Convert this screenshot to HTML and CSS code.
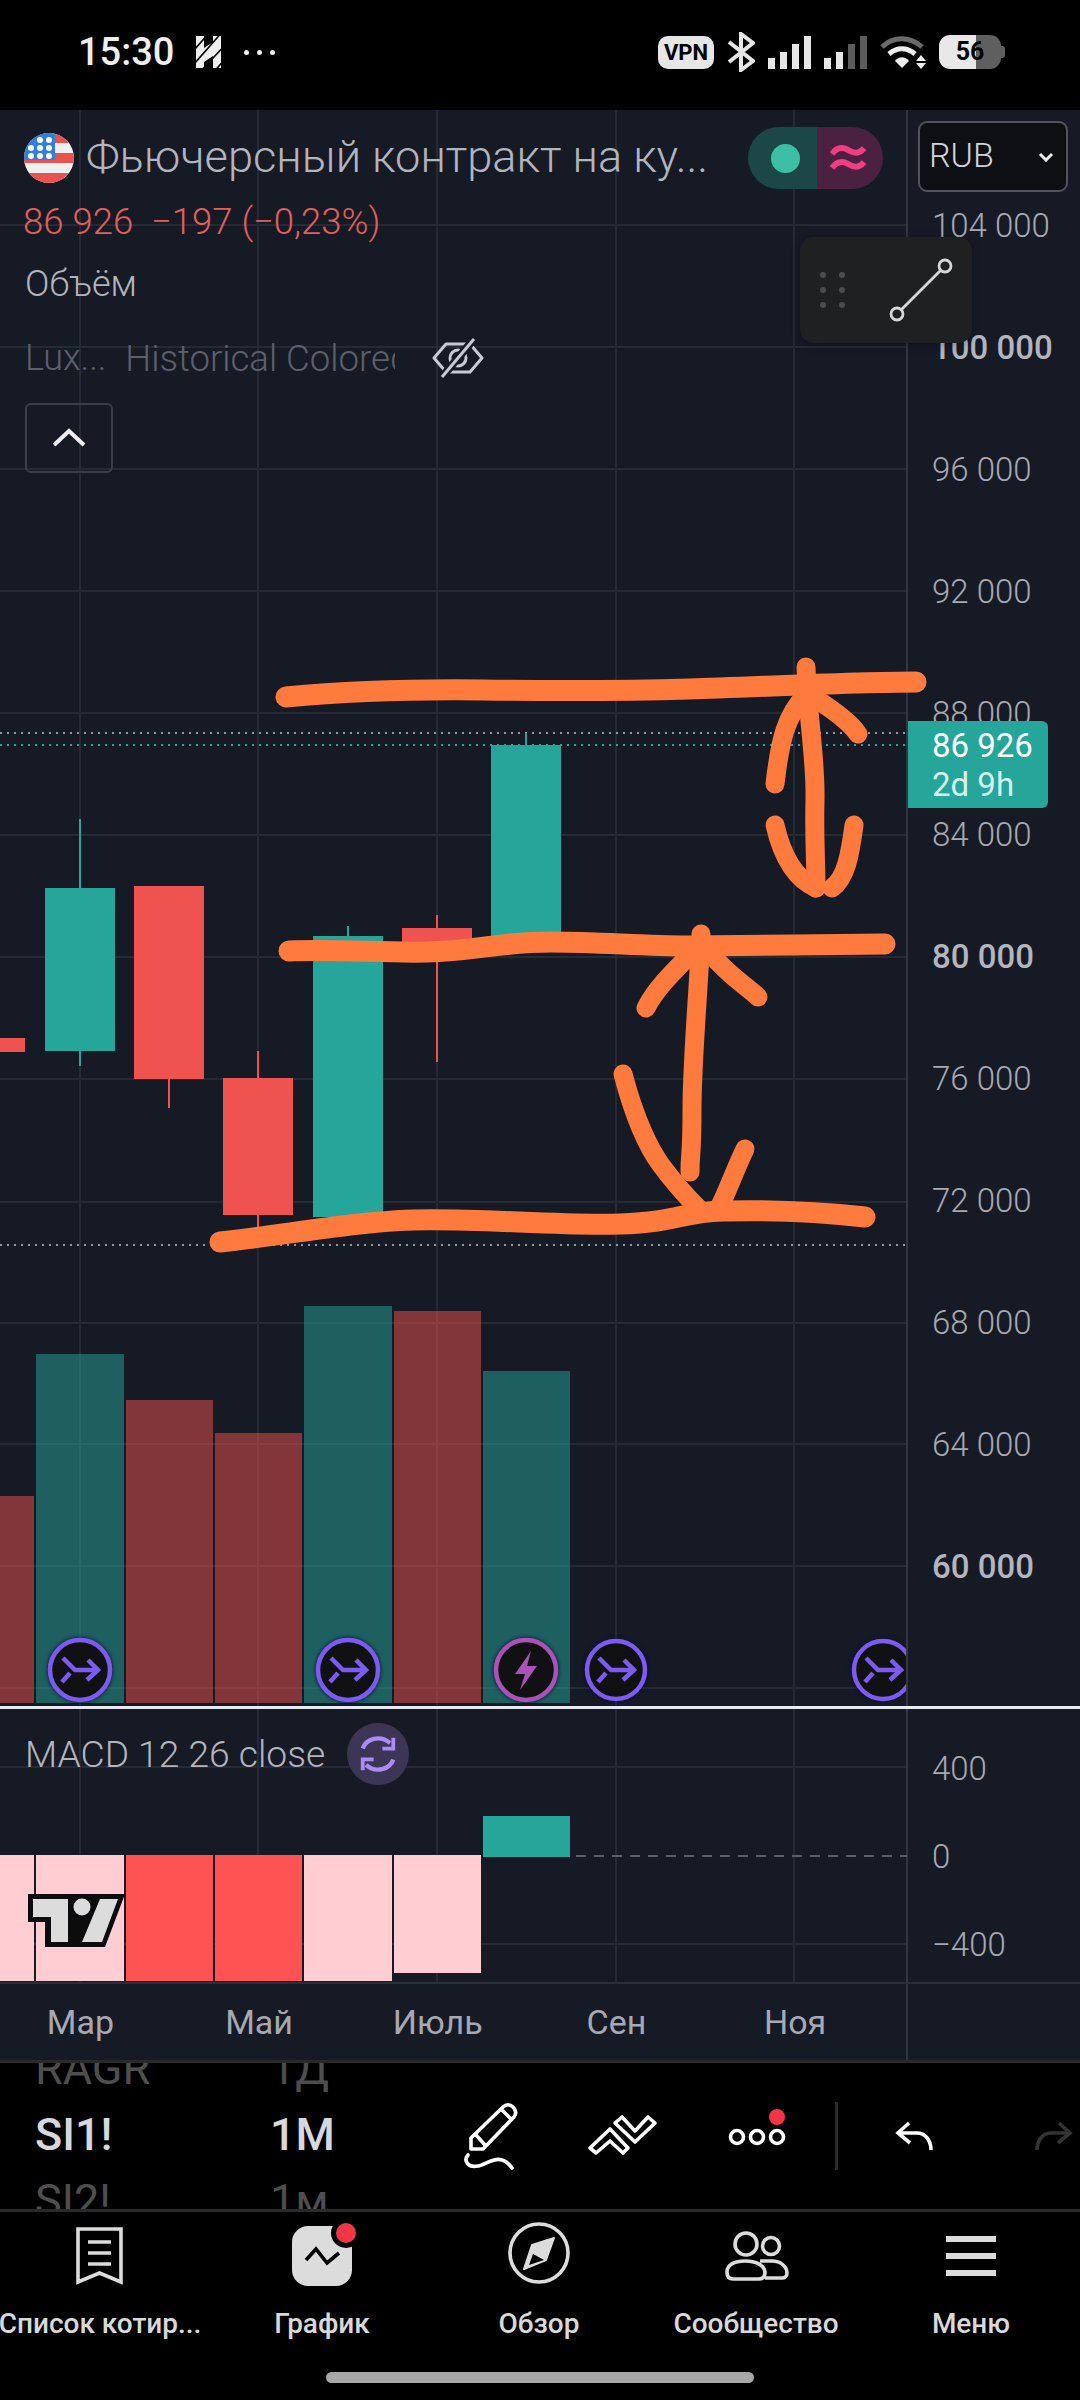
FILE: index.html
```html
<!DOCTYPE html>
<html lang="ru">
<head>
  <meta charset="UTF-8" />
  <meta name="viewport" content="width=device-width, initial-scale=1.0"/>
  <title>SI1! 1M</title>
  <link rel="stylesheet" href="styles.css">
</head>
<body>

<svg class="defs" width="0" height="0">
    <symbol id="swapArrow" viewBox="-32 -32 64 64">
        <path d="M-17 -12 L-5 0 H18 M8 -10 L18 0 L7 10 M-18 12 L-10 3" fill="none" stroke="currentColor" stroke-width="4.5"/>
    </symbol>
</svg>

<!-- Status bar -->
<header class="status-bar">
    <span class="clock">15:30</span>
    <svg class="status-app" viewBox="0 0 26 32" width="26" height="32">
        <path d="M0 0H8V12L17 6V0H25V32H17V20L8 26V32H0Z" fill="#eee"/>
        <path d="M-2 14L14 -4M-2 28L28 -6M4 36L30 8M16 38L30 22" stroke="#000" stroke-width="1.6"/>
    </svg>
    <span class="status-more"><i></i><i></i><i></i></span>
    <div class="status-icons">
        <span class="vpn">VPN</span>
        <svg viewBox="0 0 28 40" width="28" height="40">
            <path d="M2 10L26 29L14 38V2L26 11L2 30" fill="none" stroke="#e6e6e6" stroke-width="4"/>
        </svg>
        <svg viewBox="0 0 43 33" width="43" height="33" fill="#e6e6e6">
            <rect x="0" y="22" width="7" height="11"/><rect x="12" y="16" width="7" height="17"/>
            <rect x="24" y="8" width="7" height="25"/><rect x="36" y="0" width="7" height="33"/>
        </svg>
        <svg viewBox="0 0 43 33" width="43" height="33" fill="#e6e6e6">
            <rect x="0" y="22" width="7" height="11"/><rect x="12" y="16" width="7" height="17"/>
            <rect x="24" y="8" width="7" height="25" fill="#5c5c5c"/><rect x="36" y="0" width="7" height="33" fill="#5c5c5c"/>
        </svg>
        <svg viewBox="0 0 46 33" width="46" height="33">
            <path d="M2 11C13 0 30 0 42 11" fill="none" stroke="#6a6a6a" stroke-width="5"/>
            <path d="M9 18C17 11 27 11 35 18" fill="none" stroke="#eee" stroke-width="5"/>
            <path d="M15 25C19 20 25 20 29 25L22 32Z" fill="#eee"/>
            <path d="M41 19L46 25H36ZM36 27H46L41 33Z" fill="#eee"/>
        </svg>
        <span class="battery">56</span>
    </div>
</header>

<main class="chart">
    <!-- grid, candles, bars -->
    <svg class="chart-marks" viewBox="0 110 1080 1950" width="1080" height="1950">
        <clipPath id="plotClip"><rect x="0" y="110" width="906" height="1600"/></clipPath>
        <g class="grid">
            <path d="M0 225H907M0 347H907M0 469H907M0 591H907M0 713H907M0 835H907M0 957H907M0 1079H907M0 1202H907M0 1323H907M0 1444H907M0 1566H907M0 1688H907M0 1767H907M0 1944H907"/>
            <path d="M80 110V1982M258 110V1982M437 110V1982M616 110V1982M794 110V1982"/>
        </g>
        <path class="axis-line" d="M907 110V2060"/>

        <path class="dots-light" d="M0 733H907M0 1245H907"/>
        <path class="dots-teal" d="M0 745H907"/>

        <g class="up">
            <rect x="45" y="888" width="70" height="163"/><rect x="79" y="819" width="2" height="247"/>
            <rect x="313" y="936" width="70" height="281"/><rect x="347" y="926" width="2" height="296"/>
            <rect x="491" y="745" width="70" height="200"/><rect x="525" y="733" width="2" height="14"/>
        </g>
        <g class="down">
            <rect x="0" y="1038" width="25" height="14"/>
            <rect x="134" y="886" width="70" height="193"/><rect x="168" y="1079" width="2" height="29"/>
            <rect x="223" y="1078" width="70" height="137"/><rect x="257" y="1051" width="2" height="180"/>
            <rect x="402" y="928" width="70" height="30"/><rect x="436" y="915" width="2" height="147"/>
        </g>

        <g class="vol-up">
            <rect x="36" y="1354" width="88" height="349"/>
            <rect x="304" y="1306" width="88" height="397"/>
            <rect x="483" y="1371" width="87" height="332"/>
        </g>
        <g class="vol-down">
            <rect x="0" y="1496" width="34" height="207"/>
            <rect x="126" y="1400" width="87" height="303"/>
            <rect x="215" y="1433" width="87" height="270"/>
            <rect x="394" y="1311" width="87" height="392"/>
        </g>

        <g clip-path="url(#plotClip)">
            <g class="event">
                <circle cx="80" cy="1670" r="30"/><use href="#swapArrow" x="48" y="1638" width="64" height="64"/>
            </g>
            <g class="event">
                <circle cx="348" cy="1670" r="30"/><use href="#swapArrow" x="316" y="1638" width="64" height="64"/>
            </g>
            <g class="event event-pink">
                <circle cx="526" cy="1670" r="30"/>
                <path class="bolt" d="M531 1651L515 1674H525L520 1690L537 1666H527Z"/>
            </g>
            <g class="event">
                <circle cx="616" cy="1670" r="29"/><use href="#swapArrow" x="584" y="1638" width="64" height="64"/>
            </g>
            <g class="event">
                <circle cx="883" cy="1670" r="29"/><use href="#swapArrow" x="851" y="1638" width="64" height="64"/>
            </g>
        </g>

        <path class="zero-line" d="M0 1856H907"/>
        <g class="hist-light">
            <rect x="0" y="1855" width="34" height="126"/>
            <rect x="36" y="1855" width="88" height="126"/>
            <rect x="304" y="1855" width="88" height="126"/>
            <rect x="394" y="1855" width="87" height="118"/>
        </g>
        <g class="hist-strong">
            <rect x="126" y="1855" width="87" height="126"/>
            <rect x="215" y="1855" width="87" height="126"/>
        </g>
        <rect class="hist-up" x="483" y="1816" width="87" height="41"/>

        <!-- TradingView mark -->
        <path d="M28 1894H125L105 1947H45V1922H28Z" fill="#0c0c0e"/>
        <path d="M33 1899H68V1942H51V1917H33ZM100 1899H118L102 1942H82Z" fill="#dcdcdc"/>
        <circle cx="82" cy="1907" r="12" fill="#0c0c0e"/>
        <circle cx="82" cy="1907" r="8.5" fill="#dcdcdc"/>
    </svg>

    <section class="pane pane-main">
        <div class="plot">
            <div class="legend">
                <div class="legend-title">
                    <svg class="flag" viewBox="0 0 50 50" width="50" height="50">
                        <clipPath id="flagClip"><circle cx="25" cy="25" r="25"/></clipPath>
                        <g clip-path="url(#flagClip)">
                            <rect width="50" height="50" fill="#f0f0f0"/>
                            <path d="M0 0H50V10H0ZM0 20H50V30H0ZM0 40H50V50H0Z" fill="#e8534f"/>
                            <rect width="31" height="27" fill="#2f7fe0"/>
                            <g fill="#fff">
                                <circle cx="16" cy="7" r="3"/><circle cx="25" cy="7" r="3"/>
                                <circle cx="7" cy="15" r="3"/><circle cx="16" cy="15" r="3"/><circle cx="25" cy="15" r="3"/>
                                <circle cx="7" cy="23" r="3"/><circle cx="16" cy="23" r="3"/><circle cx="25" cy="23" r="3"/>
                            </g>
                        </g>
                    </svg>
                    <span class="symbol-name">Фьючерсный контракт на ку...</span>
                    <div class="market-toggle">
                        <span class="toggle-open"><i></i></span>
                        <span class="toggle-delay">
                            <svg viewBox="0 0 36 28" width="36" height="28">
                                <path d="M2 10C7 3 13 3 18 6S29 11 34 4M2 24C7 17 13 17 18 20S29 25 34 18" fill="none" stroke="#f23d80" stroke-width="6"/>
                            </svg>
                        </span>
                    </div>
                </div>
                <div class="legend-price">86 926&nbsp; −197 (−0,23%)</div>
                <div class="legend-row">Объём</div>
                <div class="legend-row legend-hidden">
                    <span>Lux...</span>
                    <span class="hidden-name">Historical Colored</span>
                    <svg viewBox="0 0 52 42" width="52" height="42">
                        <path d="M2 21L14 7H38L50 21L38 35H14Z" fill="none" stroke="#c8cbd3" stroke-width="3" stroke-linejoin="round"/>
                        <circle cx="26" cy="21" r="8" fill="none" stroke="#c8cbd3" stroke-width="3"/>
                        <path d="M42 2L10 40" stroke="#161a25" stroke-width="8"/>
                        <path d="M42 2L10 40" stroke="#c8cbd3" stroke-width="3"/>
                    </svg>
                </div>
                <button class="collapse-btn">
                    <svg viewBox="0 0 34 20" width="34" height="20">
                        <path d="M2 17L17 3L32 17" fill="none" stroke="#eee" stroke-width="4"/>
                    </svg>
                </button>
            </div>
        </div>
        <div class="price-axis axis-main">
            <span>104 000</span>
            <span class="strong">100 000</span>
            <span>96 000</span>
            <span>92 000</span>
            <span>88 000</span>
            <span>84 000</span>
            <span class="strong">80 000</span>
            <span>76 000</span>
            <span>72 000</span>
            <span>68 000</span>
            <span>64 000</span>
            <span class="strong">60 000</span>
        </div>
    </section>

    <div class="pane-sep"></div>

    <section class="pane pane-macd">
        <div class="plot">
            <div class="macd-legend">
                <span>MACD 12 26 close</span>
                <span class="macd-sync">
                    <svg viewBox="0 0 44 44" width="48" height="48" fill="none" stroke="#a98cf5" stroke-width="4">
                        <path d="M8 17C11 8 24 4 33 12"/>
                        <path d="M36 27C33 36 20 40 11 32"/>
                        <path d="M36 7V17H26M8 37V27H18" stroke-width="3.5"/>
                    </svg>
                </span>
            </div>
        </div>
        <div class="price-axis axis-macd">
            <span>400</span>
            <span>0</span>
            <span>−400</span>
        </div>
    </section>

    <footer class="time-axis">
        <span>Мар</span><span>Май</span><span>Июль</span><span>Сен</span><span>Ноя</span>
    </footer>

    <!-- overlays -->
    <div class="currency"><span>RUB</span>
        <svg viewBox="0 0 16 10" width="16" height="10">
            <path d="M2 2L8 8L14 2" fill="none" stroke="#eee" stroke-width="3"/>
        </svg>
    </div>
    <div class="price-tag">
        <span>86 926</span>
        <span class="countdown">2d 9h</span>
    </div>
    <div class="tool-float">
        <span class="grip"><i></i><i></i><i></i><i></i><i></i><i></i></span>
        <svg viewBox="0 0 64 64" width="64" height="64" fill="none" stroke="#d8d8d8" stroke-width="2.8">
            <circle cx="8" cy="56" r="6"/>
            <circle cx="56" cy="8" r="6"/>
            <path d="M12.5 51.5L51.500 12.500"/>
        </svg>
    </div>

    <!-- hand drawn marks on top of the chart -->
    <svg class="annotations" viewBox="0 110 1080 1950" width="1080" height="1950">
        <path d="M286 697C340 692 400 689 482 690S620 691 689 689S850 682 916 682"/>
        <path class="arrow" d="M806 667C808 720 816 760 815 800S816 860 816 888"/>
        <path class="arrow" d="M775 784C780 740 786 715 806 695M818 700C835 712 850 722 858 734"/>
        <path class="arrow" d="M775 825C783 860 798 880 816 888M854 825C850 855 846 878 832 888"/>

        <path d="M289 951C340 949 380 953 427 952S500 942 551 942S640 946 689 946S830 944 885 944"/>
        <path class="arrow" d="M701 934C698 1000 692 1060 692 1110S690 1150 690 1172"/>
        <path class="arrow" d="M690 955C670 975 655 990 646 1008M712 955C728 975 745 985 758 997"/>
        <path class="arrow" d="M623 1074C635 1120 650 1150 661 1165S685 1195 699 1209M745 1149C735 1170 728 1190 720 1206"/>

        <path d="M220 1242C280 1236 350 1222 413 1220S560 1226 620 1224S680 1212 723 1211S820 1212 865 1217"/>
    </svg>
</main>

<!-- Drawing toolbar with symbol picker -->
<section class="toolbar">
    <div class="picker">
        <div class="picker-row picker-far"><span>RAGR</span><span>1Д</span></div>
        <div class="picker-row"><span>SI1!</span><span>1М</span></div>
        <div class="picker-row picker-far"><span>SI2!</span><span>1м</span></div>
    </div>
    <div class="tools">
        <svg viewBox="460 2100 60 70" width="60" height="70" fill="none" stroke="#fff" stroke-width="3.6" stroke-linejoin="round">
            <path d="M471 2148V2137L503 2106C506 2103 510 2103 513 2106S517 2112 514 2116L483 2148Z"/>
            <path d="M502 2109L512 2119M475 2133L486 2145"/>
            <path d="M468 2154C463 2160 468 2167 478 2165S500 2150 512 2167" stroke-linecap="round"/>
        </svg>
        <svg viewBox="585 2100 75 70" width="75" height="70" fill="none" stroke="#fff" stroke-width="3.6" stroke-linejoin="round">
            <path d="M590 2147L610 2128L628 2147L623 2152L610 2140L596 2152Z"/>
            <path d="M615 2122L622 2116L635 2130L648 2116L655 2122L635 2141Z"/>
        </svg>
        <svg viewBox="725 2100 65 70" width="65" height="70">
            <g fill="none" stroke="#fff" stroke-width="3.6">
                <circle cx="737" cy="2136" r="6.500"/><circle cx="757" cy="2136" r="6.500"/><circle cx="777" cy="2136" r="6.500"/>
            </g>
            <circle cx="777" cy="2116" r="10" fill="#000"/>
            <circle cx="777" cy="2116" r="8" fill="#f23645"/>
        </svg>
        <span class="tool-sep"></span>
        <svg class="tool-undo" viewBox="890 2100 50 70" width="50" height="70" fill="none" stroke="#fff" stroke-width="3.600">
            <path d="M910 2122L899 2132L911 2142M899 2132H918C926 2132 932 2139 932 2149"/>
        </svg>
        <svg class="tool-redo" viewBox="1030 2100 50 70" width="50" height="70" fill="none" stroke="#333" stroke-width="3.600">
            <path d="M1060 2122L1071 2132L1059 2142M1071 2132H1052C1044 2132 1038 2139 1038 2149"/>
        </svg>
    </div>
</section>

<!-- Bottom navigation -->
<nav class="bottom-nav">
    <div class="nav-item">
        <svg viewBox="70 2225 76 70" width="76" height="70" fill="none" stroke="#dcdcdc" stroke-width="3.6">
            <path d="M86 2232H129V2285L107.500 2276L86 2285Z"/>
            <path d="M96 2245H119M96 2256H119M96 2267H119"/>
        </svg>
        <span>Список котир...</span>
    </div>
    <div class="nav-item">
        <svg viewBox="285 2225 76 70" width="76" height="70">
            <rect x="293" y="2229" width="60" height="60" rx="16" fill="#dcdcdc"/>
            <path d="M307 2263L317 2252L328 2266L340 2256" fill="none" stroke="#000" stroke-width="3.600"/>
            <circle cx="347" cy="2236" r="15" fill="#000"/>
            <circle cx="347" cy="2236" r="10" fill="#f23645"/>
        </svg>
        <span>График</span>
    </div>
    <div class="nav-item">
        <svg viewBox="500 2225 76 70" width="76" height="70">
            <circle cx="538" cy="2256" r="29" fill="none" stroke="#dcdcdc" stroke-width="3.600"/>
            <path d="M553 2241L545 2263L523 2272L531 2248Z" fill="#dcdcdc" stroke="#dcdcdc" stroke-width="2" stroke-linejoin="round"/>
            <path d="M532 2257L543 2263L528 2268Z" fill="#000"/>
        </svg>
        <span>Обзор</span>
    </div>
    <div class="nav-item">
        <svg viewBox="718 2225 76 70" width="76" height="70" fill="none" stroke="#dcdcdc" stroke-width="3.600">
            <circle cx="746" cy="2247" r="11"/>
            <circle cx="771" cy="2249" r="8.500"/>
            <path d="M727 2275C727 2268 734 2264 745 2264S764 2268 765 2275C765 2280 763 2282 759 2282H733C729 2282 727 2280 727 2275Z"/>
            <path d="M760 2264H772C781 2264 787 2270 787 2276C787 2279 785 2281 782 2281H765"/>
        </svg>
        <span>Сообщество</span>
    </div>
    <div class="nav-item">
        <svg viewBox="935 2225 76 70" width="76" height="70" fill="#dcdcdc">
            <rect x="948" y="2239" width="50" height="6"/>
            <rect x="948" y="2256" width="50" height="6"/>
            <rect x="948" y="2273" width="50" height="6"/>
        </svg>
        <span>Меню</span>
    </div>
</nav>
<div class="home-bar"></div>

</body>
</html>
```
FILE: styles.css
```css
* {
    box-sizing: border-box;
}

body {
    margin: 0;
    width: 1080px;
    height: 2400px;
    overflow: hidden;
    background-color: #000;
    font-family: Roboto, 'Noto Sans', sans-serif;
}

.defs {
    position: absolute;
}

svg {
    display: block;
    flex: none;
}

/* Status bar */
.status-bar {
    display: flex;
    align-items: center;
    height: 110px;
    padding: 0 76px 6px 78px;
    color: #eee;
}

.clock {
    font-size: 38px;
    font-weight: 500;
    width: 118px;
}

.status-more {
    display: flex;
    gap: 8px;
    margin-left: 22px;
}

.status-more i {
    width: 5px;
    height: 5px;
    border-radius: 50%;
    background-color: #eee;
}

.status-icons {
    display: flex;
    align-items: center;
    gap: 13px;
    margin-left: auto;
}

.vpn {
    width: 56px;
    height: 33px;
    border-radius: 10px;
    background-color: #e6e6e6;
    color: #000;
    font-size: 22px;
    font-weight: 700;
    line-height: 33px;
    text-align: center;
}

.battery {
    position: relative;
    width: 62px;
    height: 34px;
    border-radius: 11px;
    background: linear-gradient(to right, #e8e8e8 37px, #5f5f5f 37px);
    color: #000;
    font-size: 25px;
    font-weight: 700;
    line-height: 34px;
    text-align: center;
    margin-right: 3px;
}

.battery::after {
    content: "";
    position: absolute;
    right: -4px;
    top: 11px;
    width: 4px;
    height: 12px;
    border-radius: 0 3px 3px 0;
    background-color: #5f5f5f;
}

/* Chart */
.chart {
    position: relative;
    height: 1950px;
    background-color: #161a25;
    overflow: hidden;
}

.chart-marks,
.annotations {
    position: absolute;
    left: 0;
    top: 0;
}

.annotations {
    z-index: 4;
    pointer-events: none;
    fill: none;
    stroke: #ff7a3d;
    stroke-width: 21;
    stroke-linecap: round;
    stroke-linejoin: round;
}

.annotations .arrow {
    stroke-width: 19;
}

.grid path {
    fill: none;
    stroke: #262a35;
    stroke-width: 2;
}

.axis-line {
    stroke: #333743;
    stroke-width: 2;
}

.dots-light,
.dots-teal {
    fill: none;
    stroke-width: 2;
    stroke-dasharray: 2 5;
}

.dots-light {
    stroke: #9598a1;
}

.dots-teal {
    stroke: #26a69a;
}

.up {
    fill: #26a69a;
}

.down {
    fill: #ef5350;
}

.vol-up {
    fill: #26a69a;
    opacity: 0.5;
}

.vol-down {
    fill: #ef5350;
    opacity: 0.5;
}

.event {
    color: #7c5cf0;
    filter: drop-shadow(0 0 2px #0d0830);
}

.event circle {
    fill: #111114;
    stroke: #7c5cf0;
    stroke-width: 4.5;
}

.event-pink circle {
    stroke: #ab52b8;
}

.bolt {
    fill: #ab52b8;
}

.zero-line {
    fill: none;
    stroke: #5d606b;
    stroke-width: 2;
    stroke-dasharray: 10 8;
}

.hist-light {
    fill: #ffcdd2;
}

.hist-strong {
    fill: #ff5252;
}

.hist-up {
    fill: #26a69a;
}

.pane {
    position: relative;
    z-index: 1;
    display: flex;
}

.pane-main {
    height: 1596px;
}

.pane-macd {
    height: 273px;
}

.pane-sep {
    position: relative;
    z-index: 1;
    height: 3px;
    background-color: #e8eaf2;
}

.plot {
    width: 907px;
    flex: none;
}

.price-axis {
    flex: 1;
    padding-left: 25px;
    font-size: 33px;
    font-weight: 300;
    color: #a6a9b2;
}

.price-axis span {
    display: block;
}

.axis-main {
    padding-top: 55px;
}

.axis-main span {
    height: 121.9px;
    line-height: 121.9px;
}

.axis-macd {
    padding-top: 16px;
}

.axis-macd span {
    height: 88px;
    line-height: 88px;
}

.price-axis .strong {
    color: #b2b5be;
    font-weight: 500;
}

/* Legend */
.legend {
    display: flex;
    flex-direction: column;
    align-items: flex-start;
    padding: 17px 24px 0 25px;
    color: #9598a1;
    font-size: 36px;
}

.legend-title {
    display: flex;
    align-items: center;
    width: 100%;
    height: 62px;
}

.flag {
    margin-left: -1px;
}

.symbol-name {
    margin-left: 12px;
    padding-bottom: 4px;
    font-size: 45.2px;
    font-weight: 300;
    color: #b2b5be;
    white-space: nowrap;
}

.market-toggle {
    display: flex;
    margin-left: auto;
    width: 135px;
    height: 62px;
    border-radius: 31px;
    overflow: hidden;
}

.market-toggle span {
    flex: 1;
    display: flex;
    align-items: center;
    justify-content: center;
}

.toggle-open {
    background-color: #1c4747;
    padding-left: 6px;
}

.toggle-open i {
    width: 29px;
    height: 29px;
    border-radius: 50%;
    background-color: #3dbfa5;
}

.toggle-delay {
    background-color: #4a2140;
    padding-right: 4px;
}

.legend-price {
    margin: 10px 0 0 -2px;
    line-height: 46px;
    font-size: 36.5px;
    font-weight: 300;
    color: #e0605c;
    white-space: pre;
}

.legend-row {
    display: flex;
    align-items: center;
    margin-top: 16px;
    height: 46px;
    font-weight: 300;
    color: #b2b5be;
}

.legend-hidden {
    margin-top: 28px;
    color: #5d606b;
}

.hidden-name {
    width: 270px;
    margin-left: 19px;
    font-size: 36.6px;
    overflow: hidden;
    white-space: nowrap;
}

.legend-hidden svg {
    margin-left: 37px;
}

.collapse-btn {
    display: flex;
    align-items: center;
    justify-content: center;
    width: 88px;
    height: 70px;
    margin-top: 22px;
    padding: 0;
    background: none;
    border: 2px solid #3a3e49;
    border-radius: 6px;
}

.macd-legend {
    display: flex;
    align-items: center;
    padding: 14px 0 0 25px;
    font-size: 37.2px;
    font-weight: 300;
    color: #b2b5be;
}

.macd-sync {
    display: flex;
    align-items: center;
    justify-content: center;
    width: 62px;
    height: 62px;
    margin-left: 22px;
    border-radius: 50%;
    background-color: #3c3554;
}

/* Time axis */
.time-axis {
    position: relative;
    z-index: 1;
    display: grid;
    grid-template-columns: repeat(5, 178.7px);
    height: 78px;
    margin-left: -9px;
    border-top: 2px solid #2a2e39;
    font-size: 34px;
    line-height: 76px;
    color: #a6a9b2;
    text-align: center;
}

/* Overlays */
.currency {
    position: absolute;
    z-index: 2;
    left: 918px;
    top: 11px;
    display: flex;
    align-items: center;
    justify-content: space-between;
    width: 150px;
    height: 71px;
    padding: 0 12px 0 9px;
    background-color: #0e0f12;
    border: 2px solid #50535c;
    border-radius: 9px;
    font-size: 34px;
    font-weight: 300;
    color: #d1d4dc;
}

.currency span {
    padding-bottom: 4px;
}

.price-tag {
    position: absolute;
    z-index: 2;
    left: 908px;
    top: 611px;
    width: 140px;
    height: 87px;
    padding: 5px 0 0 24px;
    background-color: #26a69a;
    border-radius: 0 6px 6px 0;
    font-size: 33px;
    line-height: 39px;
    color: #fff;
}

.price-tag span {
    display: block;
}

.price-tag .countdown {
    color: #d8f2ee;
}

.tool-float {
    position: absolute;
    z-index: 3;
    left: 800px;
    top: 127px;
    display: flex;
    align-items: center;
    width: 172px;
    height: 106px;
    padding-left: 20px;
    background-color: #1f2022;
    border-radius: 14px;
    box-shadow: 0 2px 10px rgba(0, 0, 0, 0.25);
}

.tool-float svg {
    margin-left: 44px;
}

.grip {
    display: grid;
    grid-template-columns: 6px 6px;
    gap: 9px 13px;
}

.grip i {
    width: 6px;
    height: 6px;
    border-radius: 50%;
    background-color: #4c4d51;
}

/* Toolbar */
.toolbar {
    display: flex;
    height: 152px;
    background-color: #000;
    border-top: 3px solid #2a2a2a;
    border-bottom: 3px solid #2a2a2a;
    overflow: hidden;
}

.picker {
    width: 460px;
    flex: none;
    margin-top: -27px;
    padding-left: 35px;
    font-size: 45px;
    font-weight: 500;
    color: #d6d8de;
}

.picker-row {
    display: grid;
    grid-template-columns: 235px auto;
    height: 66px;
    line-height: 66px;
}

.picker-far {
    color: #4e4e4e;
    font-weight: 400;
}

.tools {
    display: flex;
    align-items: center;
    flex: 1;
}

.tools svg + svg {
    margin-left: 65px;
}

.tool-sep {
    width: 3px;
    height: 68px;
    margin: 0 51px 0 45px;
    background-color: #2a2a2a;
}

.tools .tool-redo {
    margin-left: 90px;
}

/* Bottom nav */
.bottom-nav {
    display: grid;
    grid-template-columns: 211px 222px 212px 222px 208px;
    height: 160px;
}

.nav-item {
    display: flex;
    flex-direction: column;
    align-items: center;
    padding-top: 10px;
    font-size: 28px;
    font-weight: 500;
    line-height: 40px;
    color: #d8d8d8;
    white-space: nowrap;
}

.nav-item span {
    margin-top: 12px;
}

.nav-item:first-child {
    padding-right: 11px;
}

.home-bar {
    width: 428px;
    height: 11px;
    margin: 0 auto;
    border-radius: 6px;
    background-color: #a8a8a8;
}
```
